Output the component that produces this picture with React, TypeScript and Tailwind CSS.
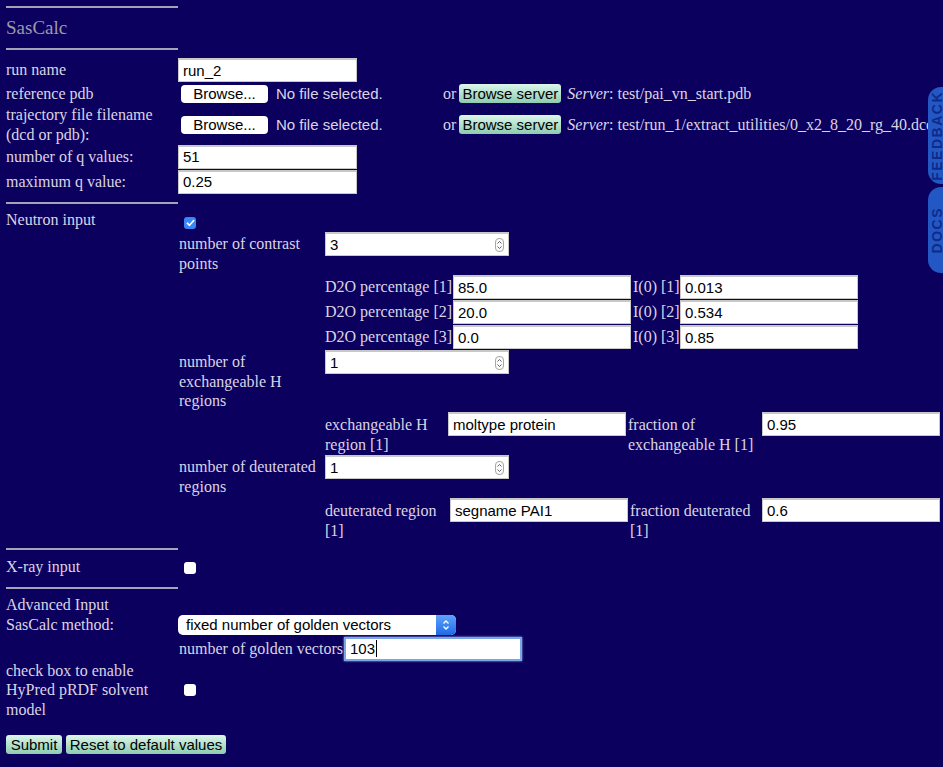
import React from "react";

const serif = "font-['Liberation_Serif','Times_New_Roman',serif]";
const sans = "font-['Liberation_Sans',Arial,sans-serif]";

function Rule() {
  return <div className="h-[2px] w-[172px] bg-[#a7a3b6]" />;
}

function TextBox({ value, w = "w-[178px]", focused = false }: { value: string; w?: string; focused?: boolean }) {
  return (
    <div
      className={`${w} ${sans} flex h-[24px] shrink-0 items-center bg-white pl-[4px] text-[15px] text-black ${
        focused
          ? "border-2 border-[#7aa6ea] shadow-[0_0_2px_#9cc0f5]"
          : "border border-t-2 border-[#c8c8c8]"
      }`}
    >
      {value}
      {focused && <span className="ml-[1px] h-[17px] w-[1px] bg-black" />}
    </div>
  );
}

function NumberBox({ value }: { value: string }) {
  return (
    <div className={`${sans} flex h-[24px] w-[184px] shrink-0 items-center justify-between border border-t-2 border-[#c8c8c8] bg-white pl-[4px] pr-[4px] text-[15px] text-black`}>
      {value}
      <svg width="9" height="14" viewBox="0 0 9 14">
        <rect x="0.5" y="0.5" width="8" height="13" rx="3.5" fill="#fafafa" stroke="#a8a8a8" />
        <path d="M2.5 5.5 L4.5 3.5 L6.5 5.5" fill="none" stroke="#555" strokeWidth="0.9" />
        <path d="M2.5 8.5 L4.5 10.5 L6.5 8.5" fill="none" stroke="#555" strokeWidth="0.9" />
      </svg>
    </div>
  );
}

function Check({ on = false }: { on?: boolean }) {
  return on ? (
    <div className="flex h-[12px] w-[12px] items-center justify-center rounded-[3px] bg-[#3a86f7]">
      <svg width="9" height="8" viewBox="0 0 9 8">
        <path d="M1.3 4.2 L3.5 6.3 L7.7 1.5" fill="none" stroke="white" strokeWidth="1.6" strokeLinecap="round" strokeLinejoin="round" />
      </svg>
    </div>
  ) : (
    <div className="h-[12px] w-[12px] rounded-[3px] bg-white" />
  );
}

function GreenButton({ children, w }: { children: React.ReactNode; w: string }) {
  return (
    <div className={`${w} ${sans} flex h-[19px] items-center justify-center whitespace-nowrap rounded-[3px] bg-linear-to-b from-[#dcf7ea] to-[#8ecbb1] text-[15px] text-black`}>
      {children}
    </div>
  );
}

function FileRow({ path }: { path: string }) {
  return (
    <div className="flex items-center whitespace-nowrap">
      <div className="flex w-[262px] items-center">
        <div className={`${sans} ml-[3px] flex h-[18px] w-[87px] items-center justify-center rounded-[4px] bg-white text-[15px] text-black`}>
          Browse...
        </div>
        <span className={`${sans} ml-[8px] text-[15px]`}>No file selected.</span>
      </div>
      <span className="ml-[3px]">or</span>
      <div className="ml-[3px]">
        <GreenButton w="w-[102px]">Browse server</GreenButton>
      </div>
      <span className="ml-[6px]">
        <i>Server</i>: {path}
      </span>
    </div>
  );
}

export default function App() {
  return (
    <div className={`relative min-h-screen overflow-hidden bg-[#0c005f] text-[#dad5e3] ${serif} text-[16px] leading-[19.5px]`}>
      <div className="pl-[6px] pt-[6px]">
        <Rule />
        <div className="flex h-[40px] items-center text-[19px] text-[#9d9aab]">SasCalc</div>
        <Rule />

        <div className="mt-[8px] flex h-[24px] items-center">
          <div className="w-[172px]">run name</div>
          <TextBox value="run_2" w="w-[179px]" />
        </div>
        <div className="flex h-[23px] items-center">
          <div className="w-[172px] shrink-0">reference pdb</div>
          <FileRow path="test/pai_vn_start.pdb" />
        </div>
        <div className="flex h-[39px] items-center">
          <div className="w-[172px] shrink-0">
            trajectory file filename
            <br />
            (dcd or pdb):
          </div>
          <FileRow path="test/run_1/extract_utilities/0_x2_8_20_rg_40.dcd" />
        </div>
        <div className="flex h-[25px] items-center">
          <div className="w-[172px]">number of q values:</div>
          <TextBox value="51" w="w-[179px]" />
        </div>
        <div className="flex h-[25px] items-center">
          <div className="w-[172px]">maximum q value:</div>
          <TextBox value="0.25" w="w-[179px]" />
        </div>

        <div className="mt-[8px]">
          <Rule />
        </div>

        <div className="flex h-[28px] items-start">
          <div className="w-[172px] pt-[6px]">Neutron input</div>
          <div className="ml-[6px] mt-[13px]">
            <Check on />
          </div>
        </div>

        <div className="flex">
          <div className="w-[172px] shrink-0" />
          <div className="flex flex-col">
            <div className="flex h-[43px] items-start">
              <div className="w-[147px] pl-[1px] pt-[2px]">
                number of contrast
                <br />
                points
              </div>
              <NumberBox value="3" />
            </div>

            {[
              ["1", "85.0", "0.013"],
              ["2", "20.0", "0.534"],
              ["3", "0.0", "0.85"],
            ].map(([n, d, i]) => (
              <div key={n} className="ml-[147px] flex h-[25px] items-start whitespace-nowrap">
                <div className="w-[128px] leading-[24px]">D2O percentage [{n}]</div>
                <TextBox value={d} />
                <div className="w-[49px] pl-[2px] leading-[24px]">I(0) [{n}]</div>
                <TextBox value={i} />
              </div>
            ))}

            <div className="flex h-[62px] items-start">
              <div className="w-[147px] pl-[1px] pt-[2px]">
                number of
                <br />
                exchangeable H
                <br />
                regions
              </div>
              <NumberBox value="1" />
            </div>

            <div className="ml-[147px] flex h-[43px] items-start">
              <div className="w-[123px] pt-[3px]">
                exchangeable H
                <br />
                region [1]
              </div>
              <TextBox value="moltype protein" />
              <div className="w-[136px] pl-[2px] pt-[3px]">
                fraction of
                <br />
                exchangeable H [1]
              </div>
              <TextBox value="0.95" />
            </div>

            <div className="flex h-[43px] items-start">
              <div className="w-[147px] pl-[1px] pt-[2px]">
                number of deuterated
                <br />
                regions
              </div>
              <NumberBox value="1" />
            </div>

            <div className="ml-[147px] flex h-[43px] items-start">
              <div className="w-[125px] pt-[3px]">
                deuterated region
                <br />
                [1]
              </div>
              <TextBox value="segname PAI1" />
              <div className="w-[134px] pl-[2px] pt-[3px]">
                fraction deuterated
                <br />
                [1]
              </div>
              <TextBox value="0.6" />
            </div>
          </div>
        </div>

        <div className="mt-[7px]">
          <Rule />
        </div>

        <div className="flex h-[37px] items-start">
          <div className="w-[172px] pt-[7px]">X-ray input</div>
          <div className="ml-[6px] mt-[12px]">
            <Check />
          </div>
        </div>

        <Rule />

        <div className="mt-[6px]">Advanced Input</div>
        <div className="flex h-[20px] items-center">
          <div className="w-[172px]">SasCalc method:</div>
          <div className={`${sans} flex h-[20px] w-[278px] items-center justify-between rounded-[5px] bg-white pl-[8px] text-[15px] text-black`}>
            fixed number of golden vectors
            <div className="flex h-[20px] w-[20px] items-center justify-center rounded-r-[5px] bg-linear-to-b from-[#5ea2fb] to-[#1d6ae6]">
              <svg width="8" height="12" viewBox="0 0 8 12">
                <path d="M1.5 4.5 L4 2 L6.5 4.5" fill="none" stroke="white" strokeWidth="1.3" />
                <path d="M1.5 7.5 L4 10 L6.5 7.5" fill="none" stroke="white" strokeWidth="1.3" />
              </svg>
            </div>
          </div>
        </div>
        <div className="mt-[2px] flex h-[24px] items-center">
          <div className="w-[172px]" />
          <div className="w-[166px] pl-[1px] whitespace-nowrap">number of golden vectors</div>
          <TextBox value="103" focused />
        </div>
        <div className="flex items-center">
          <div className="w-[172px]">
            check box to enable
            <br />
            HyPred pRDF solvent
            <br />
            model
          </div>
          <div className="ml-[6px]">
            <Check />
          </div>
        </div>

        <div className="mt-[16px] flex gap-[4px]">
          <GreenButton w="w-[56px]">Submit</GreenButton>
          <GreenButton w="w-[160px]">Reset to default values</GreenButton>
        </div>
      </div>

      <div className="absolute right-[-12px] top-[87px] flex h-[97px] w-[27px] items-center rounded-l-[13px] bg-[#2358c4] pl-[1px]">
        <span className={`${sans} rotate-180 text-[14px] font-bold leading-[16px] tracking-[1.5px] text-[#0e2b8c] [writing-mode:vertical-rl]`}>
          FEEDBACK
        </span>
      </div>
      <div className="absolute right-[-12px] top-[187px] flex h-[86px] w-[27px] items-center rounded-l-[13px] bg-[#2358c4] pl-[1px]">
        <span className={`${sans} rotate-180 text-[14px] font-bold leading-[16px] tracking-[1.5px] text-[#0e2b8c] [writing-mode:vertical-rl]`}>
          DOCS
        </span>
      </div>
    </div>
  );
}
